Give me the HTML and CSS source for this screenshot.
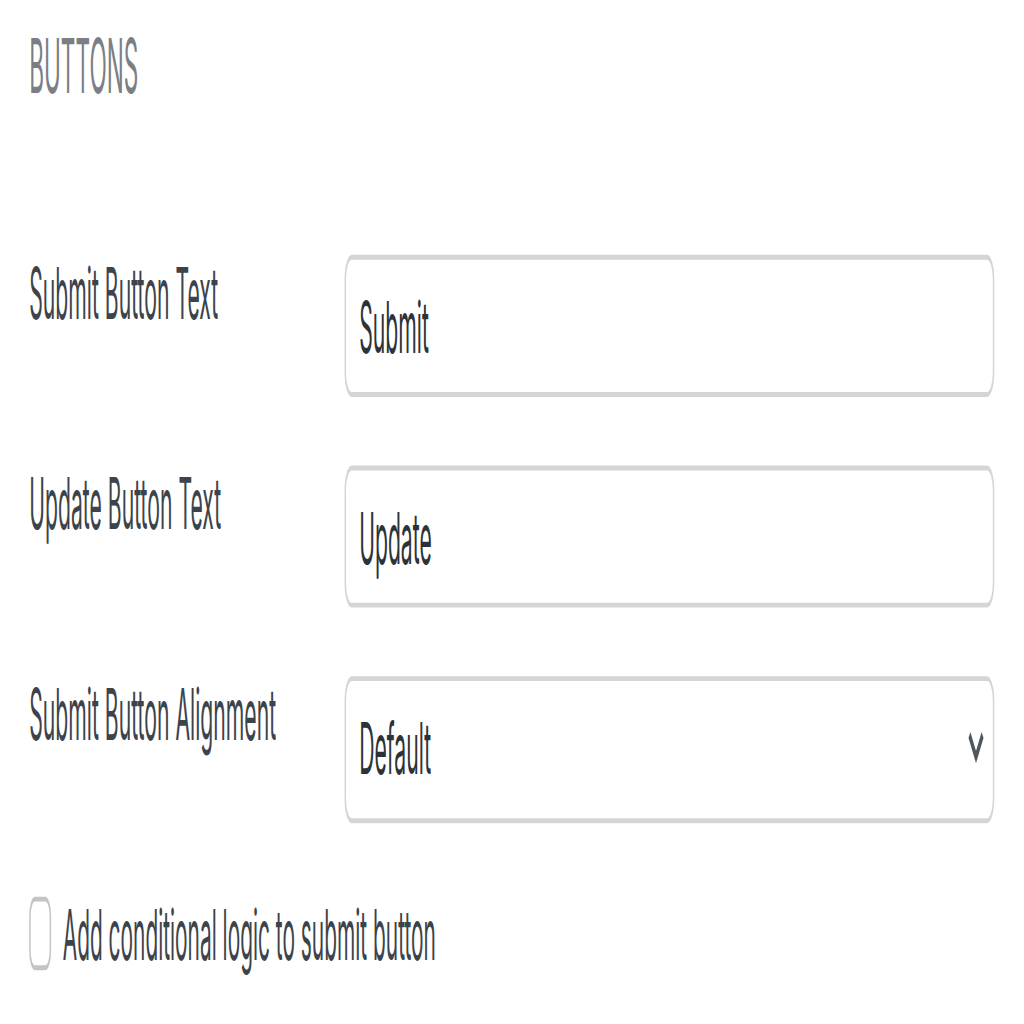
FILE: index.html
```html
<!DOCTYPE html>
<html lang="en">
<head>
<meta charset="utf-8">
<title>Buttons settings</title>
<link rel="stylesheet" href="styles.css">
</head>
<body>
<section class="panel">
  <h2 class="title">BUTTONS</h2>
  <div class="rows">
    <div class="row">
      <span class="label">Submit Button Text</span>
      <div class="field"><span class="value">Submit</span></div>
    </div>
    <div class="row">
      <span class="label">Update Button Text</span>
      <div class="field"><span class="value">Update</span></div>
    </div>
    <div class="row">
      <span class="label">Submit Button Alignment</span>
      <div class="field select">
        <span class="value">Default</span>
        <svg class="chev" width="11" height="7" viewBox="0 0 11 7"><polyline points="1,1 5.5,5.5 10,1" fill="none" stroke="#50575e" stroke-width="1.8"/></svg>
      </div>
    </div>
  </div>
  <label class="check"><span class="box"></span><span class="check-text">Add conditional logic to submit button</span></label>
</section>
</body>
</html>
```

FILE: styles.css
```css
html, body {
  margin: 0;
  background: #ffffff;
}
body {
  width: 1024px;
  height: 1024px;
  overflow: hidden;
}
.panel {
  width: 701px;
  height: 209px;
  box-sizing: border-box;
  padding: 3.4px 20px 0;
  transform: scale(1.46, 4.9);
  transform-origin: 0 0;
  font-family: Inter, "Noto Sans", sans-serif;
}
.title {
  margin: 0;
  font-size: 15.5px;
  font-weight: 400;
  line-height: 22px;
  color: #7b7f84;
}
.rows {
  margin-top: 26.6px;
  display: flex;
  flex-direction: column;
  gap: 14px;
}
.row {
  display: grid;
  grid-template-columns: 216px 1fr;
  align-items: start;
}
.label {
  font-size: 14.5px;
  line-height: 12px;
  padding-top: 1.7px;
  color: #3c434a;
}
.field {
  height: 29px;
  box-sizing: border-box;
  border: 1px solid #d4d5d7;
  border-radius: 5px;
  padding: 0 9px;
  display: flex;
  align-items: center;
  font-size: 14.5px;
  color: #2c3338;
}
.select {
  height: 30px;
  justify-content: space-between;
  padding-right: 6px;
}
.chev {
  display: block;
}
.check {
  margin-top: 13px;
  display: flex;
  align-items: center;
  gap: 8px;
  font-size: 14.3px;
  line-height: 19px;
  color: #3c434a;
}
.box {
  width: 15px;
  height: 15px;
  box-sizing: border-box;
  border: 1px solid #c3c4c7;
  border-radius: 4px;
  flex: none;
}
```
